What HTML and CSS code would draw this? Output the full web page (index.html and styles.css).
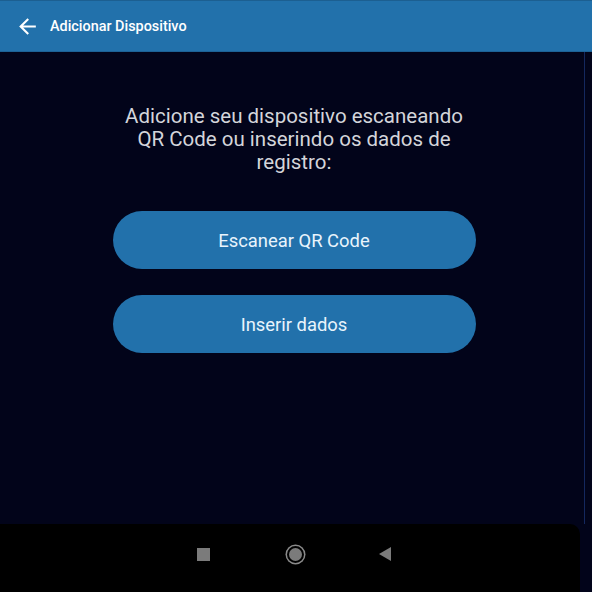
FILE: index.html
```html
<!DOCTYPE html>
<html lang="pt">
<head>
<meta charset="utf-8">
<link rel="stylesheet" href="styles.css">
</head>
<body>
<div class="screen">
  <header class="appbar">
    <svg class="back" viewBox="0 0 24 24" width="25" height="25"><path d="M20 11H7.83l5.59-5.59L12 4l-8 8 8 8 1.41-1.41L7.83 13H20v-2z" fill="#ffffff"/></svg>
    <span class="title">Adicionar Dispositivo</span>
  </header>
  <main class="content">
    <p class="intro">Adicione seu dispositivo escaneando QR Code ou inserindo os dados de registro:</p>
    <div class="actions">
      <button class="btn">Escanear QR Code</button>
      <button class="btn">Inserir dados</button>
    </div>
  </main>
  <nav class="navbar">
    <span class="nav-square"></span>
    <span class="nav-circle"></span>
    <svg class="nav-tri" viewBox="0 0 12 14" width="12" height="14"><path d="M12 0V14L0 7Z" fill="#7b7b7b"/></svg>
  </nav>
</div>
</body>
</html>
```
FILE: styles.css
```css
html, body {
  margin: 0;
  padding: 0;
  background: #02041a;
}
.screen {
  width: 592px;
  height: 592px;
  display: flex;
  flex-direction: column;
  font-family: Roboto, "Noto Sans", sans-serif;
  overflow: hidden;
}
.appbar {
  height: 50px;
  flex: none;
  background: #2271ab;
  border-top: 1px solid #1c5f91;
  border-bottom: 1px solid #1d6296;
  display: flex;
  align-items: center;
  padding-left: 15px;
}
.back {
  display: block;
  margin-right: 10px;
}
.title {
  color: #ffffff;
  font-size: 14.4px;
  font-weight: 500;
}
.content {
  flex: 1;
  display: flex;
  flex-direction: column;
  align-items: center;
  padding-top: 53px;
  padding-left: 4px;
  border-right: 1px solid #14285e;
  margin-right: 7px;
}
.intro {
  margin: 0;
  width: 352px;
  text-align: center;
  color: #d4d5da;
  font-size: 20.5px;
  line-height: 23px;
}
.actions {
  margin-top: 37px;
  display: flex;
  flex-direction: column;
  gap: 26px;
}
.btn {
  width: 363px;
  height: 58px;
  border: none;
  border-radius: 29px;
  background: #2271ab;
  color: #e9f4fc;
  font-family: Roboto, "Noto Sans", sans-serif;
  font-size: 18.4px;
  padding: 0;
}
.navbar {
  height: 68px;
  flex: none;
  background: #000000;
  margin-right: 12px;
  border-top-right-radius: 10px;
  display: flex;
  align-items: center;
  padding-left: 197px;
  padding-bottom: 8px;
  box-sizing: border-box;
}
.nav-square {
  width: 13px;
  height: 13px;
  background: #7b7b7b;
}
.nav-circle {
  width: 13px;
  height: 13px;
  border-radius: 50%;
  background: #7b7b7b;
  border: 2px solid #000;
  box-shadow: 0 0 0 1.5px #8a8a8a;
  margin-left: 77px;
}
.nav-tri {
  display: block;
  margin-left: 75px;
}
```
